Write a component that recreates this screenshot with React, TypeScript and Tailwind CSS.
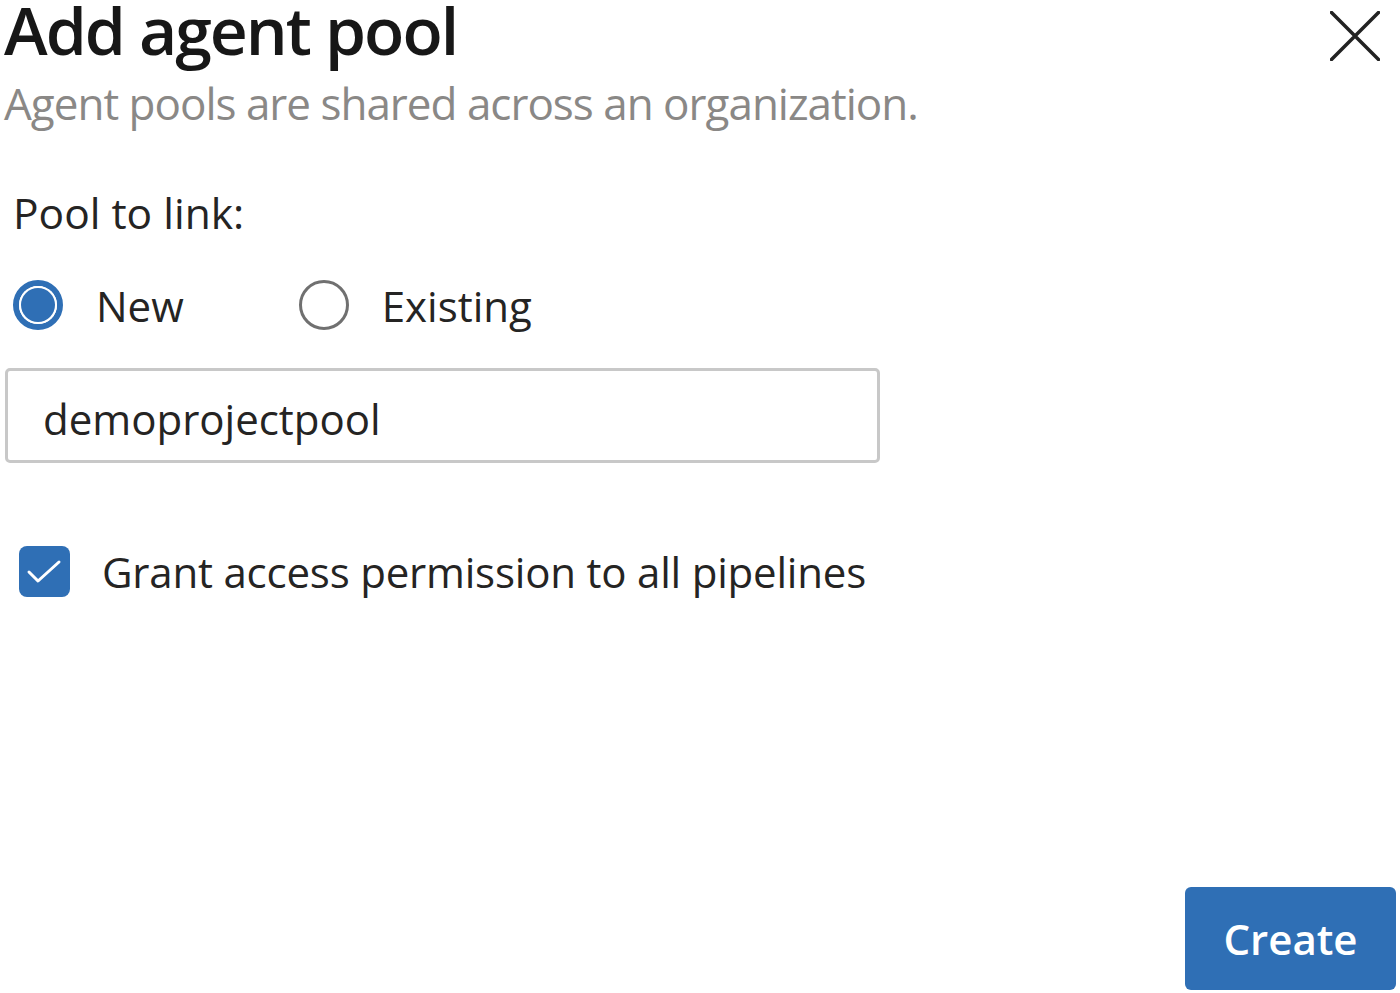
import React from 'react';

export default function App() {
  return (
    <div
      className="w-[1400px] h-[993px] bg-white flex flex-col"
      style={{ fontFamily: '"Open Sans", "Noto Sans", sans-serif' }}
    >
      {/* Header */}
      <div className="flex justify-between pl-[4px]">
        <div className="flex flex-col">
          <h1 className="text-[66px] leading-[56px] font-semibold text-[#171717] mt-[1px] tracking-[-2px]">
            Add agent pool
          </h1>
          <p className="text-[44px] leading-[60px] text-[#8a8886] mt-[16px] tracking-[-1px]">
            Agent pools are shared across an organization.
          </p>
        </div>
        <button className="w-[60px] h-[60px] mt-[6px] mr-[15px] flex items-center justify-center" aria-label="Close">
          <svg width="50" height="50" viewBox="0 0 50 50" fill="none">
            <path d="M1.5 1.5 L48.5 48.5 M48.5 1.5 L1.5 48.5" stroke="#222" strokeWidth="3.5" strokeLinecap="round" />
          </svg>
        </button>
      </div>

      {/* Pool to link */}
      <div className="pl-[13px] mt-[52px] text-[42.5px] leading-[56px] text-[#252423]">Pool to link:</div>

      <div className="flex items-center mt-[36px] pl-[13px] h-[56px]">
        <div className="flex items-center gap-[33px]">
          <span className="w-[50px] h-[50px] rounded-full border-[6px] border-[#2f6fb5] flex items-center justify-center">
            <span className="w-[34px] h-[34px] rounded-full bg-[#2f6fb5] ring-2 ring-white"></span>
          </span>
          <span className="text-[42px] text-[#252423]">New</span>
        </div>
        <div className="flex items-center gap-[33px] ml-[115px]">
          <span className="w-[50px] h-[50px] rounded-full border-[3px] border-[#707070]"></span>
          <span className="text-[42px] text-[#252423]">Existing</span>
        </div>
      </div>

      {/* Input */}
      <div className="ml-[5px] mt-[35px] w-[875px] h-[95px] border-[3px] border-[#c8c8c8] rounded-[5px] flex items-center pl-[35px] pt-[6px]">
        <span className="text-[42px] text-[#252423]">demoprojectpool</span>
      </div>

      {/* Checkbox */}
      <div className="flex items-center mt-[77px] pl-[19px] gap-[32px]">
        <span className="w-[51px] h-[51px] rounded-[8px] bg-[#2f6fb5] flex items-center justify-center">
          <svg width="51" height="51" viewBox="0 0 51 51" fill="none">
            <path d="M10 26 L19 35 L40 16" stroke="white" strokeWidth="3" strokeLinecap="round" strokeLinejoin="round" />
          </svg>
        </span>
        <span className="text-[42px] text-[#252423] tracking-[-0.2px]">Grant access permission to all pipelines</span>
      </div>

      {/* Footer */}
      <div className="flex-1"></div>
      <div className="flex justify-end pr-[4px] pb-[3px]">
        <button className="w-[211px] h-[103px] bg-[#2f6fb5] rounded-[6px] text-white text-[42px] font-semibold">
          Create
        </button>
      </div>
    </div>
  );
}
